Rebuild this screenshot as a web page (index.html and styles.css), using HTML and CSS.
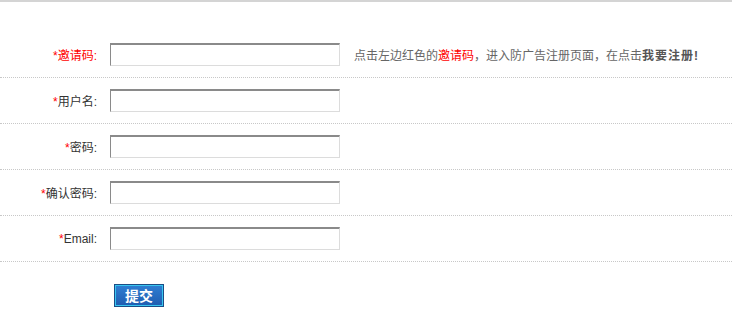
FILE: index.html
```html
<!DOCTYPE html>
<html lang="zh-CN">
<head>
  <meta charset="UTF-8" />
  <title>注册</title>
  <link rel="stylesheet" href="styles.css">
</head>
<body>
  <div class="topline"></div>

  <form class="reg">
    <div class="row">
      <label class="lbl red"><span class="star">*</span>邀请码:</label>
      <input type="text" class="txt" />
      <span class="hint">点击左边红色的<span class="red">邀请码</span>，进入防广告注册页面，在点击<b>我要注册!</b></span>
    </div>
    <div class="row">
      <label class="lbl"><span class="star">*</span>用户名:</label>
      <input type="text" class="txt" />
    </div>
    <div class="row">
      <label class="lbl"><span class="star">*</span>密码:</label>
      <input type="password" class="txt" />
    </div>
    <div class="row">
      <label class="lbl"><span class="star">*</span>确认密码:</label>
      <input type="password" class="txt" />
    </div>
    <div class="row">
      <label class="lbl"><span class="star">*</span>Email:</label>
      <input type="text" class="txt" />
    </div>
    <div class="actions">
      <button type="button" class="btn">提交</button>
    </div>
  </form>
</body>
</html>
```

FILE: styles.css
```css
body {
  margin: 0;
  font-family: "Liberation Sans", Arial, "Noto Sans CJK SC", sans-serif;
  font-size: 12px;
  color: #333;
  background: #fff;
}

.topline {
  height: 2px;
  background: #d4d4d4;
}

.reg {
  margin-top: 30px;
}

.row {
  display: flex;
  align-items: center;
  padding: 11px 0;
  border-bottom: 1px dotted #c8c8c8;
}

.lbl {
  width: 97px;
  margin-right: 13px;
  text-align: right;
  color: #333;
}

.star {
  color: #f00;
}

.red {
  color: #f00;
}

.txt {
  box-sizing: border-box;
  width: 230px;
  height: 23px;
  margin: 0;
  padding: 2px 4px;
  border: 1px solid #dcdcdc;
  border-top: 2px solid #8a8a8a;
  border-left: 1px solid #8a8a8a;
  background: #fff;
}

.hint {
  margin-left: 14px;
  color: #666;
}

.hint b {
  color: #555;
  letter-spacing: 1px;
}

.actions {
  padding: 22px 0 0 114px;
}

.btn {
  box-sizing: border-box;
  width: 50px;
  height: 23px;
  padding: 0;
  border: 1px solid #1b4d86;
  box-shadow: inset 0 0 0 1px #39c6f0;
  background: linear-gradient(#2f7fd3, #1f5cb0);
  color: #fff;
  font-family: "Noto Sans CJK SC", sans-serif;
  font-size: 14px;
  font-weight: bold;
  line-height: 19px;
}
```
